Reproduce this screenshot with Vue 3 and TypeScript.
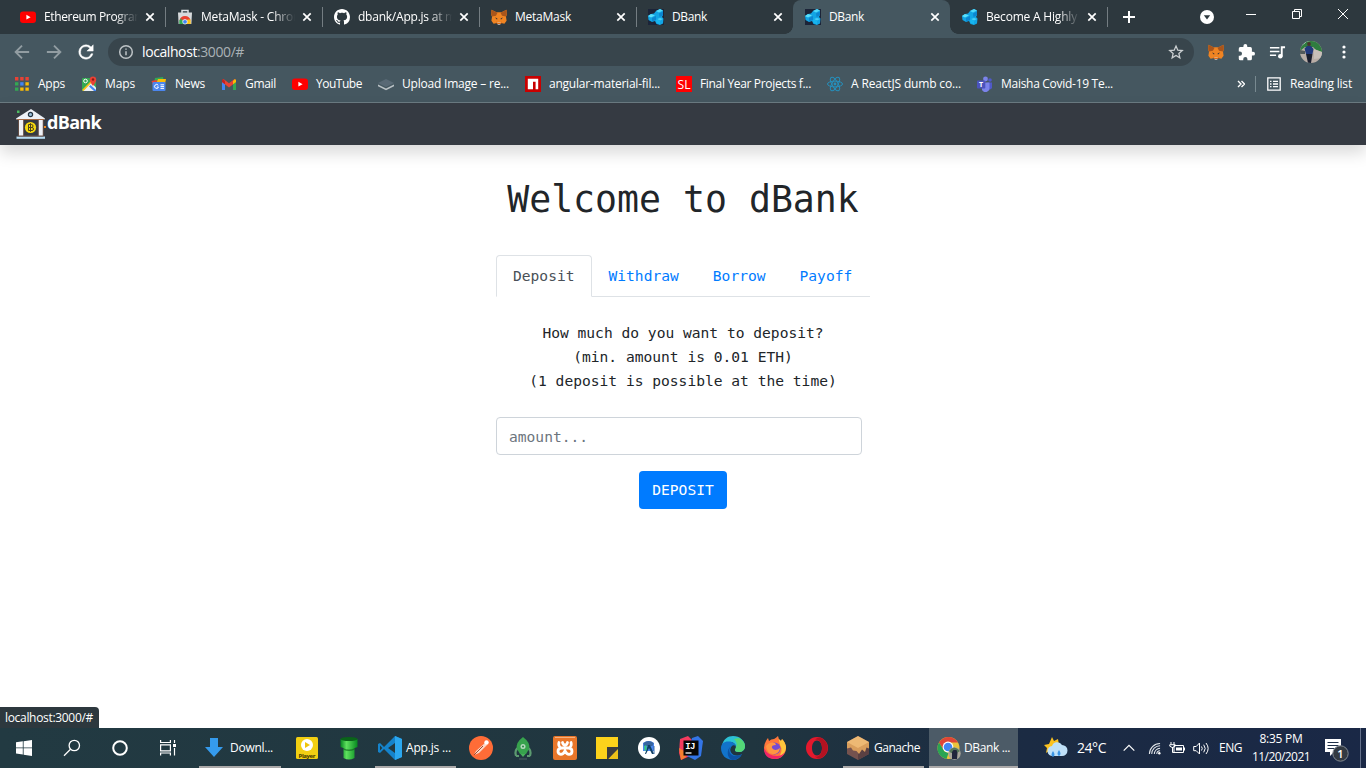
<script setup lang="ts">
import { ref } from 'vue'

interface Tab { icon: string; title: string; width: number; active?: boolean }
interface Bookmark { icon: string; label: string; width: number }
interface TaskItem { icon: string; label?: string; width?: number; kind?: string; size?: number }

/* Spreads a label over a given width by adjusting its letter spacing. */
const vFit = {
  mounted(el: HTMLElement, binding: { value: number }) {
    const range = document.createRange()
    range.selectNodeContents(el)
    const natural = range.getBoundingClientRect().width
    const count = (el.textContent || '').length
    el.style.letterSpacing = `${(binding.value - natural) / count}px`
  },
}

const cube = '<path d="M0 7l3-2 3-.5L8 2l4-2 3 1.500v4.500L14 8l1.500 1.500-.5 5-3 1.500-3.500-1L7 12l-3 1-3.500-2z" fill="#12a5e4"/><path d="M0 7l3-2 4 1.500L3 8.500z" fill="#5be0fb"/><path d="M8 2l4-2 3 1.500-4 2z" fill="#50d9fa"/><path d="M9 10l3-1 3 1-3 1.500z" fill="#46cff6"/><path d="M4 9l4-2v4l-4 1.500zM11 4.500l4-2v4L11.500 8z" fill="#0c86d0"/><path d="M8 10.500l4 1v4L8.500 14z" fill="#17b5ee"/>'
const youtube = '<rect y="2.500" width="16" height="11.500" rx="3" fill="#f00"/><path d="M6.400 5.800v4.800l4.200-2.400z" fill="#fff"/>'
const fox = '<path d="M.5.8l5 2.400h5l5-2.400.3 5-.8 2 .6 4-2.200 3-3.500-.8-.8 1H6.800L6 14l-3.400.8L.4 11.800 1 7.800l-.8-2z" fill="#f08422"/><path d="M.5.8l6 3-1.500 3-4 .8-.8-2zM15.500.8l-6 3L11 6.800l4 .8.8-2z" fill="#a9551b"/><path d="M6 13.500h4l-.8 2.300H6.800z" fill="#d8cdc4"/><path d="M4 8.500l2.300.7-.2 1.500zM12 8.500l-2.300.7.2 1.500z" fill="#3b3433"/><path d="M5 12l1.500 2h3l1.500-2-1 3H6z" fill="#dc6a17"/>'

const icons: Record<string, string> = {
  youtube, cube, fox,
  cubeDark: '<rect width="16" height="16" fill="#1c2438"/>' + cube,
  store: '<path d="M5 4V1.500h6V4" fill="none" stroke="#dfe3e5" stroke-width="1.500"/><path d="M1 3.500h14l-.6 11.500H1.600z" fill="#d7dadc"/><path d="M2.500 11.500a5.600 5.600 0 0 1 11 0H8z" fill="#e8402f"/><path d="M2.300 15v-3.500L4 9.500 8 15z" fill="#32a853"/><path d="M8 15l2.500-4.500h3l.2 4.500z" fill="#fbc116"/><circle cx="8" cy="12.800" r="2.300" fill="#4285f4" stroke="#fff" stroke-width=".7"/>',
  github: '<path fill="#fff" d="M8 0C3.580 0 0 3.580 0 8c0 3.540 2.290 6.530 5.470 7.590.4.070.55-.17.55-.38 0-.19-.01-.82-.01-1.490-2.010.37-2.530-.49-2.690-.94-.09-.23-.48-.94-.82-1.130-.28-.15-.68-.52-.01-.53.63-.01 1.080.58 1.230.82.72 1.210 1.870.87 2.330.66.07-.52.28-.87.51-1.070-1.780-.2-3.640-.89-3.640-3.950 0-.87.31-1.590.82-2.150-.08-.2-.36-1.020.08-2.120 0 0 .67-.21 2.200.82.64-.18 1.320-.27 2-.27s1.360.09 2 .27c1.530-1.040 2.200-.82 2.200-.82.44 1.100.16 1.920.08 2.120.51.56.82 1.270.82 2.150 0 3.070-1.870 3.750-3.650 3.950.29.25.54.73.54 1.480 0 1.070-.01 1.930-.01 2.200 0 .21.15.46.55.38A8.010 8.010 0 0 0 16 8c0-4.420-3.580-8-8-8z"/>',
  apps: '<g><path d="M1 1h3.400v3.400H1zM6.200 1h3.400v3.400H6.200zM11.400 1h3.400v3.400h-3.400z" fill="#e94235"/><path d="M1 6.200h3.400v3.400H1zM1 11.400h3.400v3.400H1z" fill="#34a853"/><path d="M6.200 6.200h3.400v3.400H6.200z" fill="#4285f4"/><path d="M11.400 6.200h3.400v3.400h-3.400zM6.200 11.400h3.400v3.400H6.200zM11.400 11.400h3.400v3.400h-3.400z" fill="#fbbc05"/></g>',
  maps: '<rect x="1" y="2" width="14" height="13" rx="1" fill="#34a853"/><path d="M1.500 15L10 6.500l5 5V15z" fill="#eceff1"/><path d="M9.500 9l5.500 5v1h-2L8 10.500z" fill="#4285f4"/><path d="M1 14L13 2l1 1L2.500 15z" fill="#fbc116"/><circle cx="4.500" cy="5" r="1.800" fill="none" stroke="#fff"/><path d="M12 10S8.800 6.500 8.800 3.600a3.200 3.200 0 0 1 6.400 0C15.200 6.500 12 10 12 10z" fill="#e94235"/><circle cx="12" cy="3.500" r="1.200" fill="#8b1a14"/>',
  news: '<path d="M4 2l8-1 1 6H3z" fill="#35a853"/><path d="M7 3l8 0-1 5H5z" fill="#fbbc05"/><path d="M.5 5l5-1L7 9H2z" fill="#e94235"/><rect x="1.500" y="6" width="13" height="9" rx="1" fill="#4b86ee"/><path d="M9.500 8.800H13M9.500 10.600H13M9.500 12.400H13" stroke="#fff"/><path d="M7.300 9.400a2 2 0 1 0 .2 1.600H5.800" fill="none" stroke="#fff"/>',
  gmail: '<path d="M1 4v10h3V7z" fill="#4285f4"/><path d="M12 7v7h3V4z" fill="#34a853"/><path d="M1 4.500L2.500 3 8 7.300 13.500 3 15 4.500V6l-7 5.400L1 6z" fill="#ea4335"/><path d="M12 5l2-2 1 1v2l-3 2.300z" fill="#fbbc04"/><path d="M1 4v2l3 2.300V5L2 3z" fill="#c5221f"/>',
  layers: '<path d="M8 3l8 4-8 4-8-4z" fill="#596975"/><path d="M0 8.500l8 4 8-4v1.700l-8 4-8-4z" fill="#bac2c5"/>',
  npm: '<rect width="16" height="16" fill="#c90000"/><path d="M2.800 2.800h10.400v10.400h-2.600V5.800H8v7.400H2.800z" fill="#fff"/>',
  sl: '<rect width="16" height="16" fill="#f00"/><text x="8" y="13" text-anchor="middle" font-family="Open Sans" font-size="13.500" textLength="13" lengthAdjust="spacingAndGlyphs" fill="#fff">SL</text>',
  react: '<g fill="none" stroke="#2590bd" stroke-width="1"><ellipse cx="8" cy="8" rx="7.500" ry="2.900"/><ellipse cx="8" cy="8" rx="7.500" ry="2.900" transform="rotate(60 8 8)"/><ellipse cx="8" cy="8" rx="7.500" ry="2.900" transform="rotate(120 8 8)"/></g><circle cx="8" cy="8" r="1.400" fill="#2590bd"/>',
  teams: '<circle cx="13" cy="4" r="1.800" fill="#5059c9"/><circle cx="8.500" cy="3" r="2.400" fill="#7b83eb"/><path d="M10 6.500h5v5a2.500 2.500 0 0 1-4 1.500z" fill="#5059c9"/><path d="M5 6.500h7.500v5.500a4 4 0 0 1-7.500 2z" fill="#7b83eb"/><rect y="4.500" width="8.300" height="8" rx=".8" fill="#4b53bc"/><text x="4.100" y="11.200" text-anchor="middle" font-family="Open Sans" font-weight="700" font-size="7" fill="#fff">T</text>',
  windows: '<path fill="#fff" d="M4 6.300l6.800-1v6.200H4zM11.600 5.200L20 4v7.500h-8.400zM4 12.300h6.800v6.300L4 17.600zM11.600 12.300H20V20l-8.400-1.200z"/>',
  search: '<g fill="none" stroke="#fff" stroke-width="1.300"><circle cx="14.300" cy="9.500" r="5.200"/><path d="M10.500 13.300L4 19.800"/></g>',
  cortana: '<circle cx="12" cy="12" r="6.800" fill="none" stroke="#fff" stroke-width="2"/>',
  taskview: '<g fill="none" stroke="#fff" stroke-width="1.200"><path d="M4.600 4v2.500h9.800V4M4.600 19.500V17h9.800v2.500M4.600 8.800h9.800v6H4.600zM18.500 4v3M18.500 12v7.500"/></g><path d="M17 8h3v3h-3z" fill="#fff"/>',
  download: '<path d="M8 2h8v9h5l-9 10L3 11h5z" fill="#359bed"/>',
  player: '<rect x="1" y="1" width="22" height="22" rx="1.500" fill="#f2cf12"/><circle cx="12" cy="9" r="6" fill="#fff"/><path d="M10 6v6l5-3z" fill="#efc50c"/><text x="12" y="21.500" text-anchor="middle" font-family="Open Sans" font-weight="700" font-size="6" textLength="17" fill="#443800">Player</text>',
  pipe: '<defs><linearGradient id="pg"><stop stop-color="#078522"/><stop offset=".35" stop-color="#5ee05e"/><stop offset="1" stop-color="#078a20"/></linearGradient></defs><path d="M6.500 11h11v11q-5.500 3-11 0zM3.500 3h17v8q-8.500 4-17 0z" fill="url(#pg)"/><path d="M6.500 12.300q5.500 2.500 11 0v1.500q-5.500 2.500-11 0z" fill="#0a5c19" opacity=".6"/><ellipse cx="12" cy="3" rx="8.500" ry="2" fill="#0a6419"/>',
  vscode: '<path d="M17 0l7 3v18l-7 3L6 13l-4 4-2-1V8l2-1 4 4z" fill="#1583cb"/><path d="M17 0l7 3v18l-7 3z" fill="#2ba7ef"/><path d="M17 7v10l-7-5zM2 9.500L4.300 12 2 14.500z" fill="#22383f"/>',
  postman: '<circle cx="12" cy="12" r="12" fill="#ff6c37"/><path d="M5 19l2-4 9-8 2 2-8 8z" fill="#fbd7c8"/><circle cx="17.500" cy="6.500" r="2.200" fill="#fff"/><path d="M5 19l9-9" stroke="#a44c31"/>',
  rocket: '<path d="M8 11q-5 3-3 9M16 11q5 3 3 9M5 20h3M19 20h-3" fill="none" stroke="#5c9a70" stroke-width="2.200"/><path d="M12 1q8 6 6 12l-3 5H9l-3-5q-2-6 6-12z" fill="#37a34d"/><path d="M9.500 18l2.500 3 2.500-3z" fill="#4ab05d"/><circle cx="12" cy="10.500" r="2.500" fill="#b4d9bd"/><circle cx="12" cy="10.500" r="1" fill="#268240"/><path d="M8 23h8" stroke="#4f6064"/>',
  xampp: '<rect width="24" height="24" rx="2" fill="#e8762a"/><path d="M2 1.500h20" stroke="#f3b17f"/><g fill="none" stroke="#fff" stroke-width="2.800" stroke-linecap="round"><path d="M6 6.500q-1.300 4 2.500 5.500h7q3.800-1.500 2.500-5.500M9.500 6.500q.5 2.500 2.500 2.500t2.500-2.500M8.500 12q-3.500.5-3.500 3.200T8 18.300q2.300 0 4-3.300 1.700 3.300 4 3.300 3 0 3-3.100T15.500 12"/></g>',
  sticky: '<path d="M1 1h22v10H12v12H1z" fill="#fcd21b"/><path d="M12 11h11v2L14 23h-2z" fill="#3d3f41"/><path d="M13 23L23 13v10z" fill="#ecc019"/><path d="M12 11h11v1L13 23h-1z" fill="#3b3c3e"/>',
  studio: '<circle cx="12" cy="12" r="11" fill="#fff"/><path d="M6 7q6-4 11 0v8H6z" fill="#4a85ed"/><path d="M6.500 7q5-4 10 0l-1 3H7z" fill="#38659f"/><path d="M11 9h2l4 9h-2l-3-6-3 6H8z" fill="#103f64"/><path d="M7.500 9.500h2v5h-2z" fill="#31cf78"/><path d="M17 10v8" stroke="#3d6ca5"/>',
  intellij: '<path d="M1 3l8-3 7 7-5 13-9 4-2-7z" fill="#f43b5f"/><path d="M13 2l6-2 5 5-2 15-6 4-8-4z" fill="#3375e7"/><path d="M0 12l5 3 2 6-5 3z" fill="#f58030"/><rect x="4.500" y="4.500" width="15" height="15" fill="#070708"/><path d="M6.500 17h6" stroke="#fff" stroke-width="1.300"/><text x="6.300" y="13" font-family="Liberation Mono" font-weight="700" font-size="9" textLength="10" fill="#fff">IJ</text>',
  edge: '<path d="M1 10C2 3 7 0 12 0c7 0 12 5 12 10 0 4-3 6-6 6-3 0-4-1-4-2 0-1 1-1 1-3 0-3-3-5-6-5-4 0-7 3-8 4z" fill="#2cc1d5"/><path d="M18 2c4 2 6 5 6 8 0 4-3 6-6 6-3 0-4-1-4-2l1-3q2-4-2-8z" fill="#54d777"/><path d="M0 12C0 7 4 5 8 5.500c4 0 7 2.500 7 5.500-1-2-3-2-4-1-5 5 2 13 10 8-2 4-5 6-9 6C5 24 0 19 0 12z" fill="#1273ca"/><path d="M10 10c-5 5 1 14 11 8-3 5-7 6-10 6-5-2-6-10-1-14z" fill="#0d51a2"/>',
  firefox: '<path d="M3 5q1-2 2-3l1 3q2-2 5-2 2-1 4-3 0 3 3 5 1-1 1-2 4 4 4 9a11 11 0 0 1-22 0Q1 8 3 5z" fill="#ff763b"/><path d="M15 0q0 3 3 5l1-2q4 4 4 9-1 7-8 10 6-7 2-13z" fill="#ffc63c"/><circle cx="11.500" cy="12.500" r="6" fill="#744cd2"/><path d="M3 10q4-5 9-3l1 2q-5 0-4 3 3 4 8 0-1 7-8 6-5-1-6-8z" fill="#ff9641"/><path d="M1 12q0 11 11 11 7 0 10-7-3 4-8 4Q5 20 1 12z" fill="#f02568"/>',
  opera: '<path fill-rule="evenodd" d="M12 1a11 11 0 1 0 0 22 11 11 0 0 0 0-22zm0 3.500c3 0 5 3.300 5 7.500s-2 7.500-5 7.500-5-3.300-5-7.500 2-7.500 5-7.500z" fill="#e5192d"/><path d="M15 1.500a11 11 0 0 1 0 21c-2 .5-4-1-5-2 4 1 7-3 7-8.500S14 3 10 3.500q2-2 5-2z" fill="#b31221"/>',
  ganache: '<path d="M12 0l11 6v12l-11 6-11-6V6z" fill="#75524e"/><path d="M12 12v12l11-6v-7z" fill="#5a4042"/><path d="M1 6h22v6.500l-2.500-1L19 16l-3-2.500-3 4.500-2.500-3-3.500-.5-2-3-4 1z" fill="#d99e5c"/><path d="M12 0l11 6-11 6L1 6z" fill="#edb974"/>',
  chrome: '<circle cx="11.500" cy="12" r="11" fill="#eac43b"/><path d="M2 6.500A11 11 0 0 1 21 6.500H11.500L7 14.500z" fill="#df4537"/><path d="M2 6.500l5.500 9 4 1.500-2 6A11 11 0 0 1 2 6.500z" fill="#2aa453"/><circle cx="11" cy="11" r="5.400" fill="#fff"/><circle cx="11" cy="11" r="4.300" fill="#4285f4"/><circle cx="17.500" cy="17.500" r="6.200" fill="#a9a69b"/><path d="M12 15q5-7 11 0l-3 2h-6z" fill="#56785a"/><path d="M15 23v-7l1.500-2h3l1 3-.5 6z" fill="#20253b"/>',
  weather: '<path d="M8 1l2 4 4-2 1 6-5 7-5-1-3 2 1-5-3-3 5-1z" fill="#fcc21f"/><path d="M9 20a5 5 0 0 1-1-10 5.500 5.500 0 0 1 10-1 5.500 5.500 0 0 1 0 11z" fill="#bfe0f8"/><path d="M9 15q3 4 0 6-3-2 0-6zM15 14q3 4 0 6-3-2 0-6z" fill="#3a94e4"/>',
}

const tabs: Tab[] = [
  { icon: 'youtube', title: 'Ethereum Program', width: 101 },
  { icon: 'store', title: 'MetaMask - Chrom', width: 103 },
  { icon: 'github', title: 'dbank/App.js at m', width: 98 },
  { icon: 'fox', title: 'MetaMask', width: 56 },
  { icon: 'cubeDark', title: 'DBank', width: 35 },
  { icon: 'cubeDark', title: 'DBank', width: 35, active: true },
  { icon: 'cube', title: 'Become A Highly', width: 91 },
]

const bookmarks: Bookmark[] = [
  { icon: 'apps', label: 'Apps', width: 27 },
  { icon: 'maps', label: 'Maps', width: 30 },
  { icon: 'news', label: 'News', width: 30 },
  { icon: 'gmail', label: 'Gmail', width: 31 },
  { icon: 'youtube', label: 'YouTube', width: 46 },
  { icon: 'layers', label: 'Upload Image – re...', width: 107 },
  { icon: 'npm', label: 'angular-material-fil...', width: 111 },
  { icon: 'sl', label: 'Final Year Projects f...', width: 111 },
  { icon: 'react', label: 'A ReactJS dumb co...', width: 110 },
  { icon: 'teams', label: 'Maisha Covid-19 Te...', width: 112 },
]

const tasks: TaskItem[] = [
  { icon: 'windows', kind: 'system' },
  { icon: 'search', kind: 'system' },
  { icon: 'cortana', kind: 'system' },
  { icon: 'taskview', kind: 'system' },
  { icon: 'download', label: 'Downl...', width: 43, kind: 'open' },
  { icon: 'player' },
  { icon: 'pipe' },
  { icon: 'vscode', label: 'App.js ...', width: 45, kind: 'open' },
  { icon: 'postman' },
  { icon: 'rocket' },
  { icon: 'xampp' },
  { icon: 'sticky' },
  { icon: 'studio' },
  { icon: 'intellij' },
  { icon: 'edge' },
  { icon: 'firefox' },
  { icon: 'opera' },
  { icon: 'ganache', label: 'Ganache', width: 46, kind: 'open' },
  { icon: 'chrome', label: 'DBank ...', width: 46, kind: 'open' },
]

const sections = ['Deposit', 'Withdraw', 'Borrow', 'Payoff']
const current = ref('Deposit')
const amount = ref('')
</script>

<template>
  <div class="screen">
    <div class="tabstrip">
      <div v-for="(t, i) in tabs" :key="i" class="tab" :class="{ active: t.active, plain: i === 4 }">
        <svg class="fav" viewBox="0 0 16 16" v-html="icons[t.icon]"></svg>
        <div class="title" :class="{ fade: t.width > 88 }"><span v-fit="t.width">{{ t.title }}</span></div>
        <svg class="x" viewBox="0 0 10 10"><path d="M1.300 1.300l7.400 7.400M8.700 1.300L1.300 8.700" /></svg>
      </div>
      <svg class="plus" viewBox="0 0 12 12"><path d="M6 0v12M0 6h12" /></svg>
      <svg class="disc" viewBox="0 0 14 14"><circle cx="7" cy="7" r="7" /><path d="M3.800 5.200h6.400L7 9.600z" /></svg>
      <div class="wincontrols">
        <svg viewBox="0 0 12 12"><path d="M1 6.500h10" /></svg>
        <svg viewBox="0 0 12 12"><path d="M1.500 3.500h7v7h-7zM3.500 3.500v-2h7v7h-2" /></svg>
        <svg viewBox="0 0 12 12"><path d="M1 1l10 10M11 1L1 11" /></svg>
      </div>
    </div>

    <div class="toolbar">
      <svg class="tool dim" viewBox="0 0 24 24"><path d="M21.500 12H4M12 3.500L3.500 12l8.500 8.500" /></svg>
      <svg class="tool dim" viewBox="0 0 24 24"><path d="M2.500 12H20M12 3.500l8.500 8.500-8.500 8.500" /></svg>
      <svg class="tool" viewBox="2 2 20 20"><path class="solid" d="M17.650 6.350A7.960 7.960 0 0 0 12 4a8 8 0 1 0 7.730 10h-2.080A6 6 0 1 1 12 6c1.660 0 3.140.69 4.220 1.780L13 11h7V4z" /></svg>
      <div class="omnibox">
        <svg class="info" viewBox="0 0 16 16"><circle cx="8" cy="8" r="6.300" /><path d="M8 7.200v4M8 4.500v1.300" /></svg>
        <span v-fit="55" class="host">localhost</span><span v-fit="47" class="path">:3000/#</span>
        <svg class="star" viewBox="0 0 24 24"><path d="M12 3l2.700 6.200 6.700.6-5.100 4.400 1.500 6.600-5.800-3.500-5.800 3.500 1.500-6.600-5.100-4.400 6.700-.6z" /></svg>
      </div>
      <div class="ext">
        <svg class="ext16" viewBox="0 0 16 16" v-html="icons.fox"></svg>
        <svg class="ext18" viewBox="1 1 22 22"><path fill="#fff" d="M20.500 11H19V7a2 2 0 0 0-2-2h-4V3.500a2.500 2.500 0 0 0-5 0V5H4a2 2 0 0 0-2 2v3.800h1.500a2.700 2.700 0 0 1 0 5.400H2V20a2 2 0 0 0 2 2h3.800v-1.500a2.700 2.700 0 0 1 5.400 0V22H17a2 2 0 0 0 2-2v-4h1.500a2.500 2.500 0 0 0 0-5z" /></svg>
        <svg class="ext18" viewBox="0 0 18 18"><g fill="none" stroke="#fff" stroke-width="1.600"><path d="M1 4h10M1 8h10M1 12h6.500" /><path d="M13.500 13V3.500H17" stroke-width="2" /></g><circle cx="12" cy="13" r="2.400" fill="#fff" /></svg>
        <svg class="avatar" viewBox="0 0 22 22"><defs><clipPath id="av"><circle cx="11" cy="11" r="11" /></clipPath></defs><g clip-path="url(#av)"><path fill="#b9ada6" d="M0 0h22v22H0z" /><path fill="#d6e4ea" d="M0 0h10v5H0z" /><path fill="#2f7d3f" d="M0 5l4-2 3-3h10l5 4v7l-6-2-3-3H5L0 10z" /><path fill="#c8bfb9" d="M14 8l8 3v6l-8 1z" /><path fill="#52595a" d="M0 9l5 1v3H0z" /><path fill="#22397c" d="M4.500 7.500L7 5h4l2.500 3-1 5H6z" /><circle cx="9" cy="3" r="1.900" fill="#49332b" /><path fill="#191d2e" d="M6 13h6.500l-1.500 9H8z" /></g></svg>
        <svg class="ext16" viewBox="0 0 16 16"><g fill="#fff"><circle cx="8" cy="3" r="1.600" /><circle cx="8" cy="8" r="1.600" /><circle cx="8" cy="13" r="1.600" /></g></svg>
      </div>
    </div>

    <div class="bookmarks">
      <div v-for="b in bookmarks" :key="b.label" class="bookmark">
        <svg class="fav" viewBox="0 0 16 16" v-html="icons[b.icon]"></svg>
        <span class="slot" :style="{ width: b.width + 'px' }"><span v-fit="b.width">{{ b.label }}</span></span>
      </div>
      <div class="reading">
        <svg class="more" viewBox="0 0 8 8"><path d="M1 1l3 3-3 3M4.500 1l3 3-3 3" /></svg>
        <i></i>
        <svg class="list" viewBox="0 0 14 14"><path d="M.8.8h12.400v12.400H.8zM3 4.300h1.500M6 4.300h5M3 7h1.500M6 7h5M3 9.700h1.500M6 9.700h5" /></svg>
        <span v-fit="62">Reading list</span>
      </div>
    </div>

    <main class="page">
      <nav class="navbar">
        <svg class="logo" viewBox="0 0 30 30"><path d="M0 9.500L15 0l14 9.500-1 1.500H1z" fill="#eef1f7" /><path d="M1 10h27v1H1z" fill="#a66943" /><path d="M3 11h4.500v16H3zM22.500 11H27v16h-4.500z" fill="#eef1f7" /><path d="M2.500 11v16M7.500 11v16M22.300 11v16M27.200 11v16" stroke="#705348" stroke-width=".8" /><circle cx="14.500" cy="5.500" r="2.100" fill="#9ac0dc" stroke="#263442" stroke-width="1.200" /><circle cx="14.500" cy="18.500" r="5.600" fill="#f6d90f" /><path d="M12.500 15.500h3q1.500 0 1.500 1.500t-1.500 1.500h-3zm0 3H16q1.500 0 1.500 1.500T16 21.500h-3.500zM14.500 14.200v8.600" fill="none" stroke="#4d431e" /><path d="M.5 27.500h28.500v2.300H.5z" fill="#b7dcf3" /><path d="M1.500 26.500h26v1h-26z" fill="#705348" /><path d="M1 1.500h2.500v2.500H1z" fill="#4dbb61" /><path d="M28 17h2v2h-2z" fill="#ee8820" /></svg>
        <b v-fit="54">dBank</b>
      </nav>
      <section class="content">
        <h1>Welcome to dBank</h1>
        <div class="nav-tabs">
          <a v-for="s in sections" :key="s" :class="{ selected: s === current }" @click="current = s">{{ s }}</a>
        </div>
        <p>How much do you want to deposit?<br />(min. amount is 0.01 ETH)<br />(1 deposit is possible at the time)</p>
        <input v-model="amount" type="text" placeholder="amount..." />
        <button type="button">DEPOSIT</button>
      </section>
      <div class="status"><span v-fit="88">localhost:3000/#</span></div>
    </main>

    <footer class="taskbar">
      <div v-for="t in tasks" :key="t.icon" class="task" :class="[t.kind, t.icon]">
        <svg viewBox="0 0 24 24" v-html="icons[t.icon]"></svg>
        <span v-if="t.label" v-fit="t.width || 0">{{ t.label }}</span>
      </div>
      <div class="tray">
        <svg class="weather-icon" viewBox="0 0 24 24" v-html="icons.weather"></svg>
        <span class="temp"><span v-fit="29">24°C</span></span>
        <svg class="caret" viewBox="0 0 12 8"><path d="M.7 6.700L6 1.400l5.300 5.300" /></svg>
        <svg class="wifi" viewBox="0 0 14 14"><g fill="none" stroke="#e5e9ed"><path d="M1.500 13A11.500 11.500 0 0 1 13 1.500M4 13a9 9 0 0 1 9-9M6.800 13A6.200 6.200 0 0 1 13 6.800M9.500 13A3.500 3.500 0 0 1 13 9.500" stroke-width="1.100" /></g><circle cx="12.200" cy="12.200" r="1.300" fill="#fff" /></svg>
        <svg class="battery" viewBox="0 0 16 12"><path d="M5 3.500h9.500v7H5zM15.500 5.500v3M2 0v2.500M5 0v2.500M.8 2.700h5.400v1.500q-2.700 3-5.400 0zM3.500 5v5.500H5" fill="none" stroke="#fff" /><path d="M7 5.500h6v3H7z" fill="#fff" /></svg>
        <svg class="volume" viewBox="0 0 17 13"><g fill="none" stroke="#fff"><path d="M.7 4.500h2.500L6.500 1v11L3.200 8.700H.7zM8.500 4.500q1.500 2 0 4M10.700 2.700q3 3.800 0 7.600M13 1q4.300 5.500 0 11" /></g></svg>
        <span class="lang"><span v-fit="23">ENG</span></span>
        <div class="clock"><span v-fit="43">8:35 PM</span><span v-fit="58">11/20/2021</span></div>
        <svg class="notice" viewBox="0 0 25 25"><path d="M1 1h16v13H10l-4 4v-4H1z" fill="#fff" /><path d="M3.500 4.500h11M3.500 7.500h11M3.500 10.500h7" stroke="#203049" /><circle cx="16.500" cy="15.500" r="7.700" fill="#333a42" stroke="#818891" /><text x="16.500" y="19.500" text-anchor="middle" font-size="11" font-weight="600" fill="#fff">1</text></svg>
        <i class="edge-line"></i>
      </div>
    </footer>
  </div>
</template>

<style>
html, body { margin: 0; overflow: hidden; }
</style>

<style scoped>
* { box-sizing: border-box; }
svg { display: block; flex: none; }
.screen { width: 1366px; height: 768px; display: flex; flex-direction: column; overflow: hidden; font: 12px/16px "Open Sans", "Noto Sans", sans-serif; color: #fff; background: #fff; }
.screen span { white-space: nowrap; }

.tabstrip { height: 34px; flex: none; display: flex; background: #2d383e; padding-left: 8px; position: relative; }
.tab { width: 157px; height: 34px; flex: none; display: flex; align-items: center; padding-left: 12px; position: relative; }
.tab::after { content: ""; position: absolute; right: -1px; top: 7px; width: 1px; height: 20px; background: #747d82; }
.tab:last-of-type::after { right: 0; }
.tab.active::after, .tab.plain::after { display: none; }
.tab.active { background: #455760; border-radius: 8px 8px 0 0; z-index: 1; }
.tab.active::before { content: ""; position: absolute; left: -8px; right: -8px; bottom: 0; height: 8px; background: radial-gradient(circle at 0 0, transparent 7.500px, #455760 8px) left / 8px 8px no-repeat, radial-gradient(circle at 100% 0, transparent 7.500px, #455760 8px) right / 8px 8px no-repeat; }
.fav { width: 16px; height: 16px; }
.title { width: 94px; flex: none; margin-left: 8px; overflow: hidden; }
.title.fade { -webkit-mask-image: linear-gradient(90deg, #000 76%, transparent 100%); mask-image: linear-gradient(90deg, #000 76%, transparent 100%); }
.x { width: 10px; height: 10px; margin-left: 7px; fill: none; stroke: #fff; stroke-width: 1.700; }
.plus { width: 12px; height: 12px; margin: 11px 0 0 16px; fill: none; stroke: #fff; stroke-width: 2; }
.disc { width: 14px; height: 14px; margin: 10px 0 0 65px; fill: #fff; }
.disc path { fill: #2d383e; }
.wincontrols { display: flex; gap: 34px; margin: 8px 0 0 31px; }
.wincontrols svg { width: 12px; height: 12px; fill: none; stroke: #fff; stroke-width: 1; }

.toolbar { height: 36px; flex: none; background: #455760; display: flex; align-items: center; padding-left: 13px; }
.tool { width: 18px; height: 18px; margin-right: 14px; fill: none; stroke: #fff; stroke-width: 2.500; }
.tool .solid { fill: #fff; stroke: #fff; stroke-width: .5; }
.tool.dim { stroke: #929da2; }
.omnibox { width: 1086px; height: 28px; margin-left: -1px; border-radius: 14px; background: #38454c; display: flex; align-items: center; padding-left: 10px; font-size: 14px; }
.info { width: 16px; height: 16px; margin-right: 8px; fill: none; stroke: #bdc3c6; stroke-width: 1.500; }
.path { color: #aab2b6; }
.star { width: 16px; height: 16px; margin: 0 10px 0 auto; fill: none; stroke: #cdd1d3; stroke-width: 1.900; }
.ext { display: flex; align-items: center; justify-content: space-between; width: 144px; margin-left: 14px; }
.ext16 { width: 16px; height: 16px; }
.ext18 { width: 17px; height: 17px; }
.avatar { width: 22px; height: 22px; }

.bookmarks { height: 33px; flex: none; background: #455760; border-bottom: 1px solid #6c7b82; display: flex; align-items: flex-start; gap: 16px; padding: 6px 0 0 14px; }
.bookmark { display: flex; gap: 8px; height: 16px; }
.slot { flex: none; }
.reading { margin: 0 14px 0 auto; display: flex; align-items: center; height: 16px; }
.more { width: 8px; height: 8px; fill: none; stroke: #fff; stroke-width: 1.400; }
.reading i { width: 1px; height: 16px; background: #788990; margin: 0 11px 0 10px; }
.list { width: 14px; height: 14px; margin-right: 9px; fill: none; stroke: #fff; stroke-width: 1.300; }

.page { flex: 1; min-height: 0; background: #fff; position: relative; }
.navbar { height: 42px; background: #353a42; box-shadow: 0 8px 16px rgba(0, 0, 0, .15); display: flex; align-items: flex-start; padding: 6px 0 0 16px; }
.logo { width: 30px; height: 30px; margin-right: 1px; }
.navbar b { font: 700 18px/26px "Open Sans", sans-serif; }
.content { width: 374px; margin: 0 auto; color: #212529; font: 14.600px/24px "DejaVu Sans Mono", monospace; display: flex; flex-direction: column; align-items: center; }
h1 { margin: 31px 0 0; font: 400 36.500px/48px "DejaVu Sans Mono", monospace; white-space: nowrap; }
.nav-tabs { align-self: stretch; height: 42px; margin-top: 31px; border-bottom: 1px solid #dee2e6; display: flex; }
.nav-tabs a { height: 42px; padding: 8px 16px; border: 1px solid transparent; color: #007bff; cursor: pointer; }
.nav-tabs a.selected { color: #495057; background: #fff; border-color: #dee2e6 #dee2e6 #fff; border-radius: 4px 4px 0 0; }
p { margin: 24px 0; text-align: center; white-space: nowrap; }
input { align-self: flex-start; width: 366px; height: 38px; padding: 6px 12px; border: 1px solid #ced4da; border-radius: 4px; background: #fff; color: #495057; font: inherit; outline: none; }
input::placeholder { color: #6c757d; opacity: 1; }
button { width: 88px; height: 38px; margin-top: 16px; padding: 0; border: 0; border-radius: 4px; background: #007bff; color: #fff; font: inherit; }
.status { position: absolute; left: 0; bottom: 0; width: 99px; height: 21px; border-radius: 0 4px 0 0; background: #2d383e; padding: 3px 0 0 5px; }

.taskbar { height: 40px; flex: none; display: flex; background: linear-gradient(90deg, #223a42, #20353f 55%, #1b2b43 75%, #1a2846); }
.task { width: 42px; height: 40px; flex: none; display: flex; align-items: center; justify-content: center; }
.task svg { width: 24px; height: 24px; }
.task.system { width: 48px; }
.task.open { width: 81px; border-bottom: 2px solid #aba9a9; padding-left: 3px; justify-content: flex-start; gap: 4px; margin: 0 4px 0 5px; padding-top: 2px; }
.task.download { width: 82px; margin: 0 5px 0 7px; }
.task.ganache { margin-right: 0; }
.task.chrome { width: 89px; background: #4c5b67; padding-left: 8px; gap: 3px; margin-right: 0; }
.tray { flex: 1; display: flex; align-items: center; padding-left: 26px; }
.weather-icon { width: 24px; height: 24px; }
.temp { width: 46px; margin-left: 9px; font-size: 14px; }
.caret { width: 12px; height: 8px; fill: none; stroke: #fff; stroke-width: 1.200; }
.wifi { width: 13px; height: 13px; margin-left: 13px; }
.battery { width: 16px; height: 12px; margin-left: 8px; }
.volume { width: 17px; height: 13px; margin-left: 8px; }
.lang { width: 24px; margin-left: 9px; }
.clock { width: 60px; margin-left: 8px; display: flex; flex-direction: column; align-items: center; line-height: 18px; }
.notice { width: 25px; height: 25px; margin: 4px 0 0 13px; }
.edge-line { width: 1px; height: 40px; margin-left: 11px; background: #64708a; }
</style>
